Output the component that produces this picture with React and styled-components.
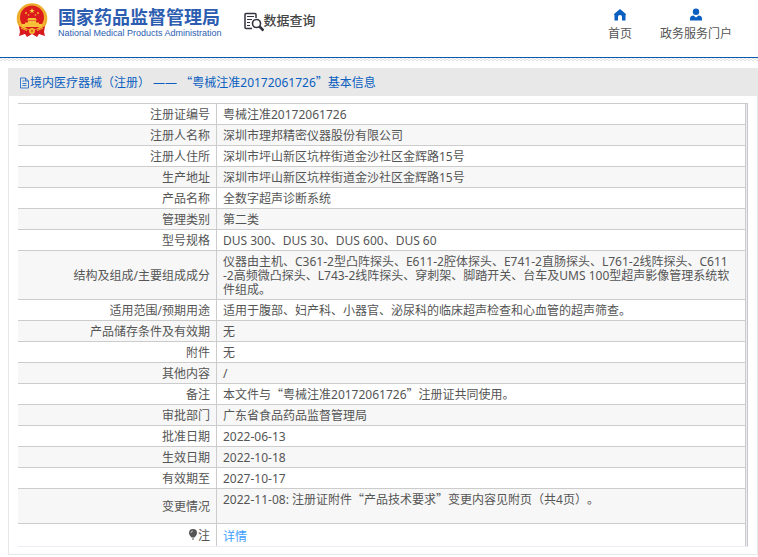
import styled, { createGlobalStyle } from 'styled-components';

const GlobalStyle = createGlobalStyle`
  * {
    box-sizing: border-box;
  }
  body {
    margin: 0;
    background: #fff;
    color: #555;
    font-family: 'Noto Sans', 'Noto Sans CJK SC', sans-serif;
    font-size: 12px;
    line-height: 14px;
    text-spacing-trim: space-all;
  }
`
const Header = styled.header`
  display: flex;
  align-items: flex-start;
  height: 58px;
  padding: 0 26px 0 16px;
  border-bottom: 1px solid #0b5cb0;
`
const HatchLine = styled.div`
  height: 3px;
  background: conic-gradient(#fff 25%, #e2e2e2 0 50%, #fff 0 75%, #e2e2e2 0) 0 0 / 4px 2px;
`
const Brand = styled.a`
  display: flex;
  gap: 10px;
  padding-top: 3px;
  color: #2c5db0;
  text-decoration: none;
`
const BrandText = styled.div`
  display: flex;
  flex-direction: column;
  padding-top: 2px;
`
const BrandName = styled.strong`
  font-family: 'Noto Sans CJK SC', sans-serif;
  font-size: 18px;
  font-weight: 700;
  line-height: 22px;
  white-space: nowrap;
`
const BrandSub = styled.span`
  font-family: 'Liberation Sans', sans-serif;
  font-size: 9px;
  line-height: 12px;
  white-space: nowrap;
`
const Section = styled.h1`
  display: flex;
  align-items: flex-start;
  margin: 12px 0 0 22px;
  color: #444;
  font-family: 'Noto Sans CJK SC', sans-serif;
  font-size: 13px;
  font-weight: 500;
  line-height: 16px;
  white-space: nowrap;
`
const Nav = styled.nav`
  display: flex;
  gap: 28px;
  margin-left: auto;
  padding-top: 8px;
`
const NavLink = styled.a`
  display: flex;
  flex-direction: column;
  align-items: center;
  gap: 6px;
  color: #555;
  text-decoration: none;
  white-space: nowrap;
`
const Panel = styled.main`
  margin: 7px 0 0 8px;
  border: 1px solid #e8e8e8;
`
const PanelTitle = styled.h2`
  display: flex;
  align-items: center;
  height: 27px;
  margin: 0;
  padding-left: 10px;
  background: #e8e8e8;
  color: #0a5fc0;
  font-size: 12px;
  font-weight: 400;
`
const Cjk = styled.span`
  font-family: 'Noto Sans CJK SC', sans-serif;
  line-height: 0;
`
const TableFrame = styled.div`
  margin: 7px 9px;
  padding-right: 1px;
  border-right: 1px solid #c8c8cc;
  border-top: 1px solid #ccc;
  border-bottom: 1px solid #ebeef5;
  background: #ebebf3;
`
const Table = styled.table`
  width: 100%;
  border-spacing: 0;
  background: #fff;
`
const Row = styled.tr`
  &:nth-child(even) {
    background: #f7f7f7;
  }
  &:not(:last-child) > * {
    border-bottom: 1px solid #ccc;
  }
`
const Label = styled.th`
  width: 199px;
  padding: 4px 6px 2px;
  border-right: 1px solid #ccc;
  font-weight: 400;
  text-align: right;
`
const Value = styled.td`
  height: ${({ $tall }) => ($tall ? 22 : 20)}px;
  padding: ${({ $tall }) => ($tall ? 6 : 4)}px 6px 2px;
  border-right: 1px solid #ccc;
  word-break: break-all;
`
const DetailLink = styled.a`
  color: #409eff;
  text-decoration: none;
`

const Emblem = () => (
  <svg width="32" height="35" viewBox="0 0 32 35" aria-hidden="true">
    <path d="M5 25 3 33l6-2 2 3 5-3 5 3 2-3 6 2-2-8z" fill="#d8191f" />
    <circle cx="16" cy="15.5" r="15.3" fill="#f2b632" />
    <circle cx="16" cy="15.5" r="14" fill="none" stroke="#e59a22" strokeWidth="1" strokeDasharray="2 1" />
    <circle cx="16" cy="14.5" r="12" fill="#dc1c1c" />
    <path d="m16 5 .7 1.900h2l-1.600 1.300.6 2L16 9l-1.700 1.200.6-2-1.600-1.300h2z" fill="#fbd13f" />
    <g fill="#f7c23a">
      <circle cx="10" cy="10" r=".9" />
      <circle cx="12.500" cy="12" r=".8" />
      <circle cx="19.500" cy="12" r=".8" />
      <circle cx="22" cy="10" r=".9" />
      <path d="M11 17.500 12.500 15h7l1.500 2.500zM12 18h8v2h-8zM6 21h20v3H6zM9 19.500h14V21H9z" />
    </g>
    <path d="M3 23c5 3 8 4 13 4s8-1 13-4l-1 6c-4 2-7 2-12 2S8 31 4 29z" fill="#d8191f" />
    <path d="M5 25c2 1 4 2 6 2.500M27 25c-2 1-4 2-6 2.500" stroke="#f2b632" fill="none" />
    <circle cx="16" cy="28" r="3" fill="#f2b632" />
    <circle cx="16" cy="28" r="1.200" fill="#dc6a1c" />
  </svg>
)

const SearchDocIcon = () => (
  <svg width="20" height="20" viewBox="0 0 20 20" fill="none" stroke="#35333f" aria-hidden="true">
    <path d="M12 6V2.500a1 1 0 0 0-1-1H2a1 1 0 0 0-1 1v13a1 1 0 0 0 1 1h6" strokeWidth="1.500" />
    <path d="M3 4.500h7M3 7.500h5M3 10.500h3M3 13.500h3" strokeWidth="1.200" />
    <circle cx="12.500" cy="11.500" r="4" strokeWidth="1.600" />
    <path d="m15.500 14.500 4 4" strokeWidth="2.600" />
  </svg>
)

const HomeIcon = () => (
  <svg width="14" height="13" viewBox="0 0 14 13" fill="#0a5fc0" aria-hidden="true">
    <path d="M7 1 .8 6.200 1.500 7v5.500H5V9a2 2 0 0 1 4 0v3.500h3.500V7l.7-.8z" />
  </svg>
)

const UserIcon = () => (
  <svg width="14" height="13" viewBox="0 0 14 13" fill="#0a5fc0" aria-hidden="true">
    <circle cx="7" cy="3.700" r="3.200" />
    <path d="M1 12.500v-2C1 8.600 2.500 7.800 4.500 7.600L7 9.500l2.500-1.900c2 .2 3.500 1 3.500 2.900v2z" />
  </svg>
)

const DocIcon = () => (
  <svg width="11" height="12" viewBox="0 0 11 12" fill="none" stroke="#0a5fc0" strokeWidth=".8" aria-hidden="true">
    <path d="M1.500 1h5l3 3v7h-8zM6.500 1v3h3M3.500 4h2M3.500 6.500h4M3.500 8.500h4" />
  </svg>
)

const BulbIcon = () => (
  <svg width="10" height="11" viewBox="0 0 10 11" aria-hidden="true">
    <path d="M5 0a4 4 0 0 0-4 4c0 2 1.500 3 2.500 4.500h3C7.500 7 9 6 9 4a4 4 0 0 0-4-4zM4 9.500h2v1H4z" fill="#555" />
    <path d="M3 4a2 2 0 0 1 2-2" stroke="#ddd" strokeWidth=".8" fill="none" />
  </svg>
)

const rows = [
  ['注册证编号', '粤械注准20172061726'],
  ['注册人名称', '深圳市理邦精密仪器股份有限公司'],
  ['注册人住所', '深圳市坪山新区坑梓街道金沙社区金辉路15号'],
  ['生产地址', '深圳市坪山新区坑梓街道金沙社区金辉路15号'],
  ['产品名称', '全数字超声诊断系统'],
  ['管理类别', '第二类'],
  ['型号规格', 'DUS 300、DUS 30、DUS 600、DUS 60'],
  ['结构及组成/主要组成成分', <>仪器由主机、C361-2型凸阵探头、E611-2腔体探头、E741-2直肠探头、L761-2线阵探头、C611<br />-2高频微凸探头、L743-2线阵探头、穿刺架、脚踏开关、台车及UMS 100型超声影像管理系统软件组成。</>],
  ['适用范围/预期用途', '适用于腹部、妇产科、小器官、泌尿科的临床超声检查和心血管的超声筛查。'],
  ['产品储存条件及有效期', '无'],
  ['附件', '无'],
  ['其他内容', '/'],
  ['备注', <>本文件与<Cjk>“</Cjk>粤械注准20172061726<Cjk>”</Cjk>注册证共同使用。</>],
  ['审批部门', '广东省食品药品监督管理局'],
  ['批准日期', '2022-06-13'],
  ['生效日期', '2022-10-18'],
  ['有效期至', '2027-10-17'],
  ['变更情况', <>2022-11-08: 注册证附件<Cjk>“</Cjk>产品技术要求<Cjk>”</Cjk>变更内容见附页（共4页）。<br /><br /></>],
]

const App = () => {
  return (
    <>
      <GlobalStyle />
      <Header>
        <Brand href="#">
          <Emblem />
          <BrandText>
            <BrandName>国家药品监督管理局</BrandName>
            <BrandSub>National Medical Products Administration</BrandSub>
          </BrandText>
        </Brand>
        <Section><SearchDocIcon />数据查询</Section>
        <Nav>
          <NavLink href="#"><HomeIcon />首页</NavLink>
          <NavLink href="#"><UserIcon />政务服务门户</NavLink>
        </Nav>
      </Header>
      <HatchLine />
      <Panel>
        <PanelTitle>
          <DocIcon />
          <span>境内医疗器械（注册） —— <Cjk>“</Cjk>粤械注准20172061726<Cjk>”</Cjk>基本信息</span>
        </PanelTitle>
        <TableFrame>
          <Table>
            <tbody>
              {rows.map(([label, value]) => (
                <Row key={label}>
                  <Label scope="row">{label}</Label>
                  <Value>{value}</Value>
                </Row>
              ))}
              <Row>
                <Label scope="row"><BulbIcon />注</Label>
                <Value $tall><DetailLink href="#">详情</DetailLink></Value>
              </Row>
            </tbody>
          </Table>
        </TableFrame>
      </Panel>
    </>
  )
}

export default App
